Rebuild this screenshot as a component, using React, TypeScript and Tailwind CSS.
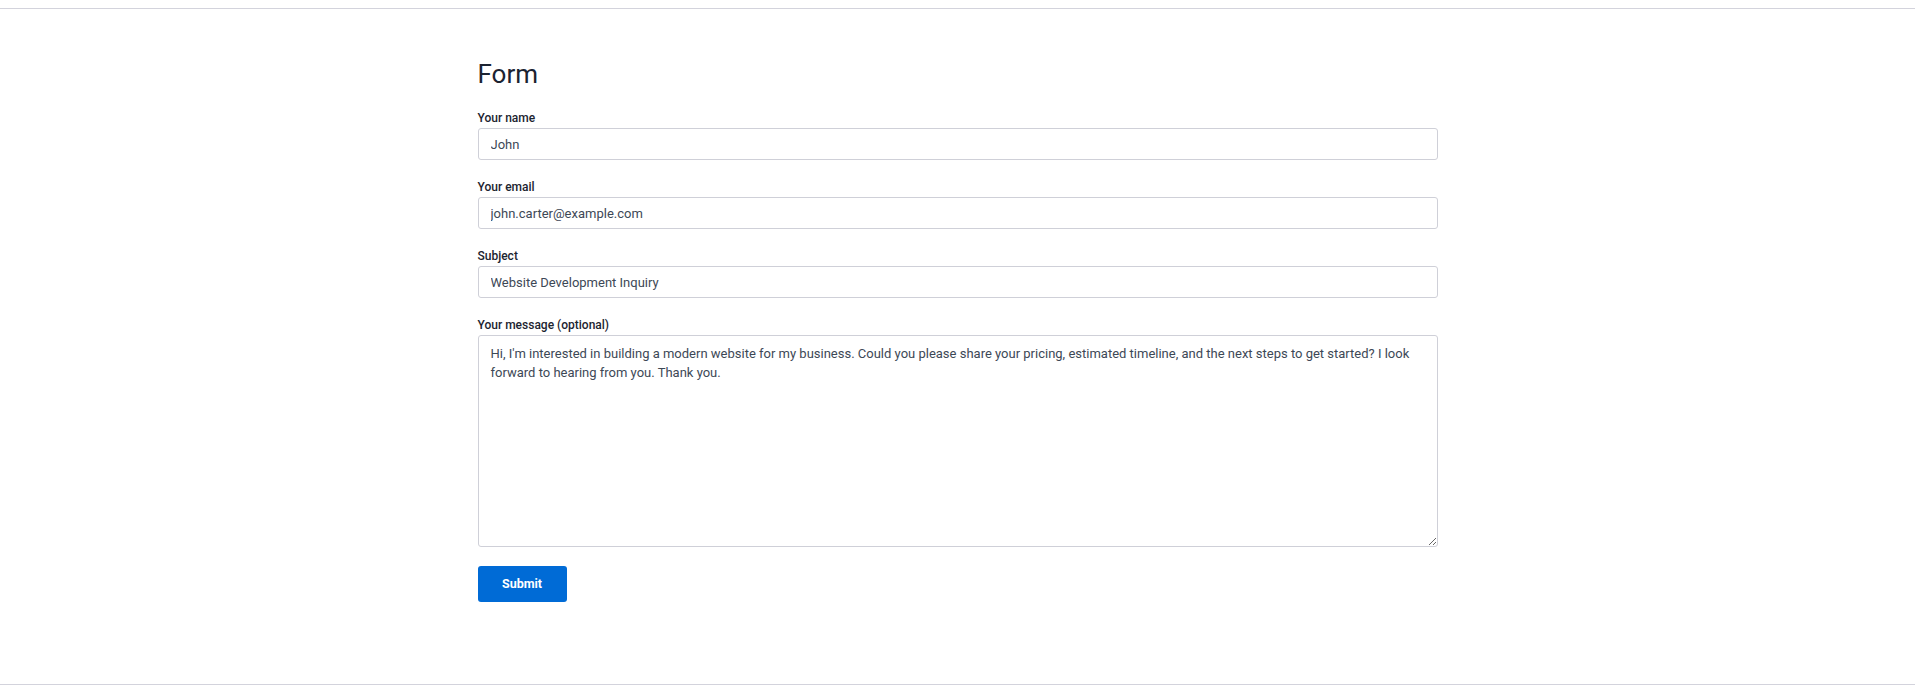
import React from "react";

const message =
  "Hi, I'm interested in building a modern website for my business. Could you please share your pricing, estimated timeline, and the next steps to get started? I look forward to hearing from you. Thank you.";

function Field({ label, value }: { label: string; value: string }) {
  return (
    <div className="flex flex-col">
      <label className="mb-[2px] text-[12px] leading-[16px] font-medium text-[#1c2430]">{label}</label>
      <input
        readOnly
        defaultValue={value}
        className="h-[32px] w-full rounded-[3px] border border-[#cfd0d8] bg-white px-[12px] text-[13px] text-[#3d4856] outline-none"
      />
    </div>
  );
}

export default function App() {
  return (
    <div className="min-h-[691px] bg-white pt-2" style={{ fontFamily: "Roboto, 'Liberation Sans', sans-serif" }}>
      <div className="border-y border-[#d3d3dc]">
        <div className="mx-auto w-[960px] pt-[49px] pb-[82px]">
          <h1 className="mb-[20px] text-[26px] leading-[32px] font-normal text-[#1b2331]">Form</h1>
          <form className="flex flex-col gap-[19px]" onSubmit={(e) => e.preventDefault()}>
            <Field label="Your name" value="John" />
            <Field label="Your email" value="john.carter@example.com" />
            <Field label="Subject" value="Website Development Inquiry" />
            <div className="flex flex-col">
              <label className="mb-[2px] text-[12px] leading-[16px] font-medium text-[#1c2430]">
                Your message (optional)
              </label>
              <textarea
                readOnly
                defaultValue={message}
                className="h-[212px] w-full rounded-[3px] border border-[#cfd0d8] bg-white px-[12px] pt-[8px] text-[13px] leading-[19px] text-[#3d4856] outline-none"
              />
            </div>
            <div>
              <button
                type="submit"
                className="h-[36px] w-[89px] rounded-[3px] bg-[#006bd6] text-[12.5px] font-bold text-white"
              >
                Submit
              </button>
            </div>
          </form>
        </div>
      </div>
    </div>
  );
}
